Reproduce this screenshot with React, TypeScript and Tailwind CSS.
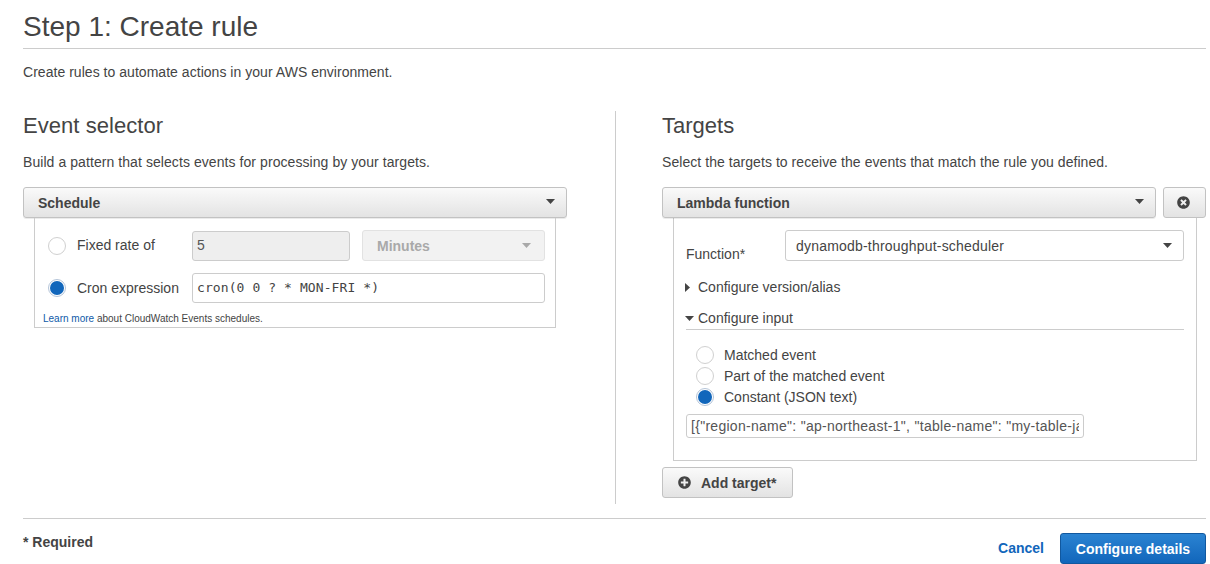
import { FaPlusCircle, FaTimesCircle } from "react-icons/fa";

function Caret({ className }: { className: string }) {
  return (
    <svg width="9" height="5" viewBox="0 0 9 5" className={className}>
      <path d="M0 0h9L4.5 5z" fill="currentColor" />
    </svg>
  );
}

function Radio({ checked }: { checked?: boolean }) {
  return (
    <span
      className={`flex h-[18px] w-[18px] shrink-0 items-center justify-center rounded-full border bg-white ${
        checked ? "border-[#b4c4d8]" : "border-[#d0d0d0]"
      }`}
    >
      {checked && <span className="h-[14px] w-[14px] rounded-full bg-[#1166bb]" />}
    </span>
  );
}

function DropButton({ label, className }: { label: string; className: string }) {
  return (
    <div
      className={`flex h-[31px] items-center justify-between rounded-[3px] border border-[#c2c2c2] bg-gradient-to-b from-[#fafafa] to-[#e3e3e3] pl-[14px] pr-[11px] text-[14px] font-bold text-[#444] shadow-[0_1px_0_rgba(0,0,0,0.08)] ${className}`}
    >
      <span className="pt-[1px]">{label}</span>
      <Caret className="text-[#444] mb-[3px]" />
    </div>
  );
}

export default function App() {
  return (
    <div className="h-[564px] overflow-hidden bg-white pl-[23px] pr-[4px] font-['Liberation_Sans',Arial,sans-serif] text-[#444]">
      {/* Header */}
      <h1 className="h-[49px] border-b border-[#cccccc] pt-[9px] text-[28px] leading-[36px] text-[#444]">
        Step 1: Create rule
      </h1>
      <p className="mt-[14px] text-[14px] leading-[18px] tracking-[0.035px] text-[#444]">
        Create rules to automate actions in your AWS environment.
      </p>

      {/* Columns */}
      <div className="mt-[30px] flex h-[393px]">
        <section className="w-[593px] shrink-0 border-r border-[#cccccc] pr-[48px]">
          <h2 className="pt-[1px] text-[22px] leading-[28px] tracking-[0.05px] text-[#444]">Event selector</h2>
          <p className="mt-[13px] text-[14px] leading-[18px] tracking-[0.07px]">
            Build a pattern that selects events for processing by your targets.
          </p>
          <DropButton label="Schedule" className="mt-[16px]" />
          <div className="mx-[11px] h-[110px] border border-t-0 border-[#cccccc] pl-[13px] pr-[10px] pt-[12px]">
            <div className="flex h-[31px] items-center">
              <Radio />
              <span className="ml-[11px] w-[115px] text-[14px]">Fixed rate of</span>
              <div className="flex h-[30px] w-[158px] items-center rounded-[3px] border border-[#cccccc] bg-[#eeeeee] px-[4px] text-[14px] text-[#555]">
                5
              </div>
              <div className="ml-[12px] flex h-[31px] flex-1 items-center justify-between rounded-[3px] border border-[#e2e2e2] bg-[#f2f2f2] pl-[14px] pr-[13px] text-[14px] font-bold text-[#a9a9a9]">
                <span className="pt-[1px]">Minutes</span>
                <Caret className="text-[#a9a9a9]" />
              </div>
            </div>
            <div className="mt-[12px] flex h-[30px] items-center">
              <Radio checked />
              <span className="ml-[11px] w-[115px] text-[14px]">Cron expression</span>
              <div className="flex h-[30px] flex-1 items-center rounded-[3px] border border-[#cccccc] bg-white px-[4px] font-['DejaVu_Sans_Mono',monospace] text-[13px] tracking-[0.09px] text-[#444]">
                {"cron(0 0 ? * MON-FRI *)"}
              </div>
            </div>
            <p className="-ml-[5px] mt-[9px] text-[10px] leading-[14px]">
              <span className="text-[#0f5aa8]">Learn more</span> about CloudWatch Events schedules.
            </p>
          </div>
        </section>

        <section className="flex-1 pl-[46px]">
          <h2 className="pt-[1px] text-[22px] leading-[28px] text-[#444]">Targets</h2>
          <p className="mt-[13px] text-[14px] leading-[18px] tracking-[0.055px]">
            Select the targets to receive the events that match the rule you defined.
          </p>
          <div className="mt-[16px] flex gap-[7px]">
            <DropButton label="Lambda function" className="flex-1" />
            <div className="flex h-[31px] w-[43px] items-center justify-center rounded-[3px] border border-[#c2c2c2] bg-gradient-to-b from-[#fafafa] to-[#e3e3e3] pr-[2px] text-[#444]">
              <FaTimesCircle size={13} />
            </div>
          </div>
          <div className="ml-[11px] mr-[9px] h-[243px] border border-t-0 border-[#cccccc] pl-[12px] pr-[12px] pt-[12px]">
            <div className="flex items-start">
              <span className="mt-[15px] w-[99px] text-[14px] leading-[18px]">Function*</span>
              <div className="flex h-[31px] flex-1 items-center justify-between rounded-[3px] border border-[#cccccc] bg-white pl-[10px] pr-[11px] text-[14px] tracking-[0.2px]">
                <span className="pt-[1px]">dynamodb-throughput-scheduler</span>
                <Caret className="text-[#444]" />
              </div>
            </div>
            <div className="mt-[15px] flex items-center text-[14px] leading-[18px]">
              <svg width="5" height="9" viewBox="0 0 5 9" className="ml-[-1px] mr-[8px] text-[#444]">
                <path d="M0 0v9l5-4.5z" fill="currentColor" />
              </svg>
              Configure version/alias
            </div>
            <div className="mt-[13px] flex items-center border-b border-[#cccccc] pb-[2px] text-[14px] leading-[18px]">
              <Caret className="mr-[4px] -ml-[1px] text-[#444]" />
              Configure input
            </div>
            <div className="ml-[10px] mt-[16px] flex flex-col gap-[3px] text-[14px] leading-[18px]">
              <div className="flex items-center gap-[10px]">
                <Radio />
                Matched event
              </div>
              <div className="flex items-center gap-[10px]">
                <Radio />
                Part of the matched event
              </div>
              <div className="flex items-center gap-[10px]">
                <Radio checked />
                Constant (JSON text)
              </div>
            </div>
            <div className="mt-[8px] flex h-[24px] w-[398px] items-center rounded-[3px] border border-[#cccccc] bg-white pl-[4px] pr-[4px] text-[14px] tracking-[0.28px] text-[#555]">
              <span className="overflow-hidden whitespace-nowrap">
                {'[{"region-name": "ap-northeast-1", "table-name": "my-table-japan"}]'}
              </span>
            </div>
          </div>
          <div className="mt-[6px] flex h-[31px] w-[131px] items-center rounded-[3px] border border-[#c2c2c2] bg-gradient-to-b from-[#fafafa] to-[#e3e3e3] pl-[15px] text-[14px] font-bold text-[#444]">
            <FaPlusCircle size={13} />
            <span className="ml-[10px] pt-[1px]">Add target*</span>
          </div>
        </section>
      </div>

      {/* Footer */}
      <div className="mt-[14px] flex h-[46px] items-start justify-between border-t border-[#cccccc]">
        <span className="mt-[14px] text-[14px] font-bold leading-[18px]">* Required</span>
        <div className="mt-[14px] flex items-center">
          <span className="text-[14px] font-bold text-[#1166bb]">Cancel</span>
          <div className="ml-[16px] flex h-[31px] w-[146px] items-center justify-center rounded-[3px] border border-[#11589f] bg-gradient-to-b from-[#2a83d2] to-[#1166bb] pt-[1px] text-[14px] font-bold text-white">
            Configure details
          </div>
        </div>
      </div>
    </div>
  );
}
